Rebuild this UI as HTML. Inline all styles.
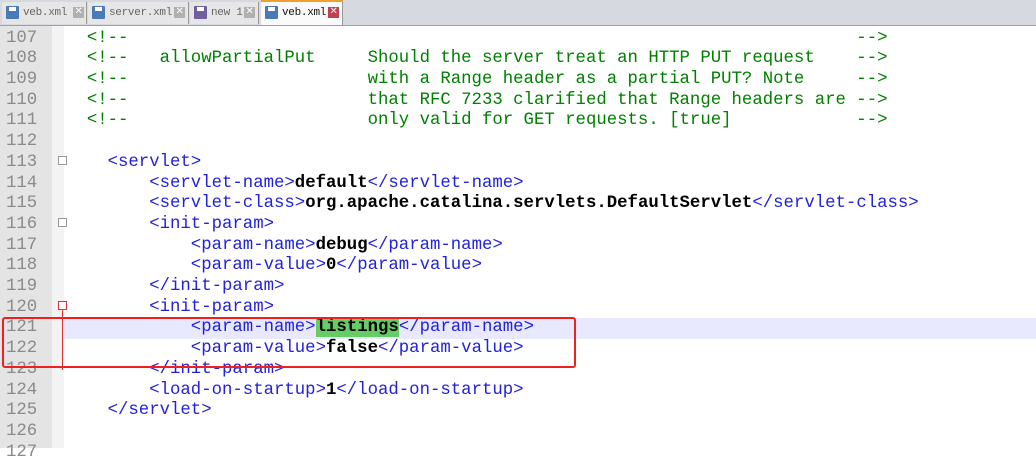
<!DOCTYPE html><html><head><style>
body{margin:0;width:1036px;height:448px;overflow:hidden;background:#fff;font-family:"Liberation Mono",monospace;}
#tabs{position:absolute;left:0;top:0;width:1036px;height:25px;background:#d6d9df;border-bottom:1px solid #a0a0a0;}
.tab{position:absolute;top:2px;height:22px;background:#e6e6e6;border-right:1px solid #999;font-size:11px;color:#666;line-height:22px;letter-spacing:-0.3px}
.tab .ic{position:absolute;left:4px;top:4px;width:13px;height:13px;background:#4a7ab8;border-radius:1px;}
.tab .ic:after{content:"";position:absolute;left:3px;top:1px;width:7px;height:4px;background:#fff}
.tab .x{position:absolute;top:5px;width:11px;height:11px;background:#b0b0b0;color:#fff;font-size:10px;line-height:11px;text-align:center;}
.tab span.t{position:absolute;left:21px}
#gut{position:absolute;left:0;top:26px;width:52px;height:422px;background:#e4e4e4;}
#fold{position:absolute;left:52px;top:26px;width:12px;height:422px;background:#f3f3f3;}
.row{position:absolute;left:0;height:20.7px;line-height:20.7px;font-size:17.33px;white-space:pre;width:1036px;}
.n{position:absolute;left:6px;color:#8a8a8a;}
.c{position:absolute;left:66px;}
.g{color:#008000}.b{color:#2222dd}.k{color:#000;font-weight:bold}
.hl{background:#e8e8ff}
</style></head><body>
<div id="tabs">
<div class="tab" style="left:2px;width:84px"><div class="ic"></div><span class="t">veb.xml</span><div class="x" style="left:71px">✕</div></div>
<div class="tab" style="left:88px;width:100px"><div class="ic"></div><span class="t">server.xml</span><div class="x" style="left:86px">✕</div></div>
<div class="tab" style="left:190px;width:68px"><div class="ic" style="background:#7060a0"></div><span class="t">new 1</span><div class="x" style="left:54px">✕</div></div>
<div class="tab" style="left:261px;width:82px;top:0;height:25px;background:#fafafa;color:#111;border-top:2px solid #f0a030;box-sizing:border-box"><div class="ic"></div><span class="t">veb.xml</span><div class="x" style="left:67px;background:#c04050">✕</div></div>
</div>
<div id="gut"></div><div id="fold"></div>
<div class="row hl" style="top:318px;left:64px;width:972px"></div>
<div id="rows"></div>
<div style="position:absolute;left:2px;top:317px;width:570px;height:47px;border:2px solid #f02020;border-radius:3px"></div>
<script>
var C='&lt;!--', E='--&gt;';
var m108='   allowPartialPut     Should the server treat an HTTP PUT request    ';
var L=[
[107,'  <g>'+C+new Array(m108.length+1).join(' ')+E+'</g>'],
[108,'  <g>'+C+m108+E+'</g>'],
[109,'  <g>'+C+'                       with a Range header as a partial PUT? Note     '+E+'</g>'],
[110,'  <g>'+C+'                       that RFC 7233 clarified that Range headers are '+E+'</g>'],
[111,'  <g>'+C+'                       only valid for GET requests. [true]            '+E+'</g>'],
[112,''],
[113,'    <b>&lt;servlet&gt;</b>'],
[114,'        <b>&lt;servlet-name&gt;</b><k>default</k><b>&lt;/servlet-name&gt;</b>'],
[115,'        <b>&lt;servlet-class&gt;</b><k>org.apache.catalina.servlets.DefaultServlet</k><b>&lt;/servlet-class&gt;</b>'],
[116,'        <b>&lt;init-param&gt;</b>'],
[117,'            <b>&lt;param-name&gt;</b><k>debug</k><b>&lt;/param-name&gt;</b>'],
[118,'            <b>&lt;param-value&gt;</b><k>0</k><b>&lt;/param-value&gt;</b>'],
[119,'        <b>&lt;/init-param&gt;</b>'],
[120,'        <b>&lt;init-param&gt;</b>'],
[121,'            <b>&lt;param-name&gt;</b><k style="background:#66cc66">listings</k><b>&lt;/param-name&gt;</b>'],
[122,'            <b>&lt;param-value&gt;</b><k>false</k><b>&lt;/param-value&gt;</b>'],
[123,'        <b>&lt;/init-param&gt;</b>'],
[124,'        <b>&lt;load-on-startup&gt;</b><k>1</k><b>&lt;/load-on-startup&gt;</b>'],
[125,'    <b>&lt;/servlet&gt;</b>'],
[126,''],[127,'']];
var h='';
L.forEach(function(r,i){var s=r[1].replace(/<g>/g,'<span class="g">').replace(/<\/g>/g,'</span>').replace(/<b>/g,'<span class="b">').replace(/<\/b>/g,'</span>').replace(/<k( [^>]*)?>/g,function(m,a){return '<span class="k"'+(a||'')+'>'}).replace(/<\/k>/g,'</span>');
h+='<div class="row" style="top:'+(28.6+i*20.7)+'px"><span class="n">'+r[0]+'</span><span class="c">'+s+'</span></div>';});
document.getElementById('rows').innerHTML=h;
</script>
<div style="position:absolute;left:58px;top:156px;width:7px;height:7px;border:1px solid #999;background:#fff"></div>
<div style="position:absolute;left:58px;top:218px;width:7px;height:7px;border:1px solid #999;background:#fff"></div>
<div style="position:absolute;left:58px;top:301px;width:7px;height:7px;border:1px solid #e03030;background:#fff"></div>
<div style="position:absolute;left:62px;top:310px;width:1px;height:60px;background:#e03030"></div>
</body></html>
